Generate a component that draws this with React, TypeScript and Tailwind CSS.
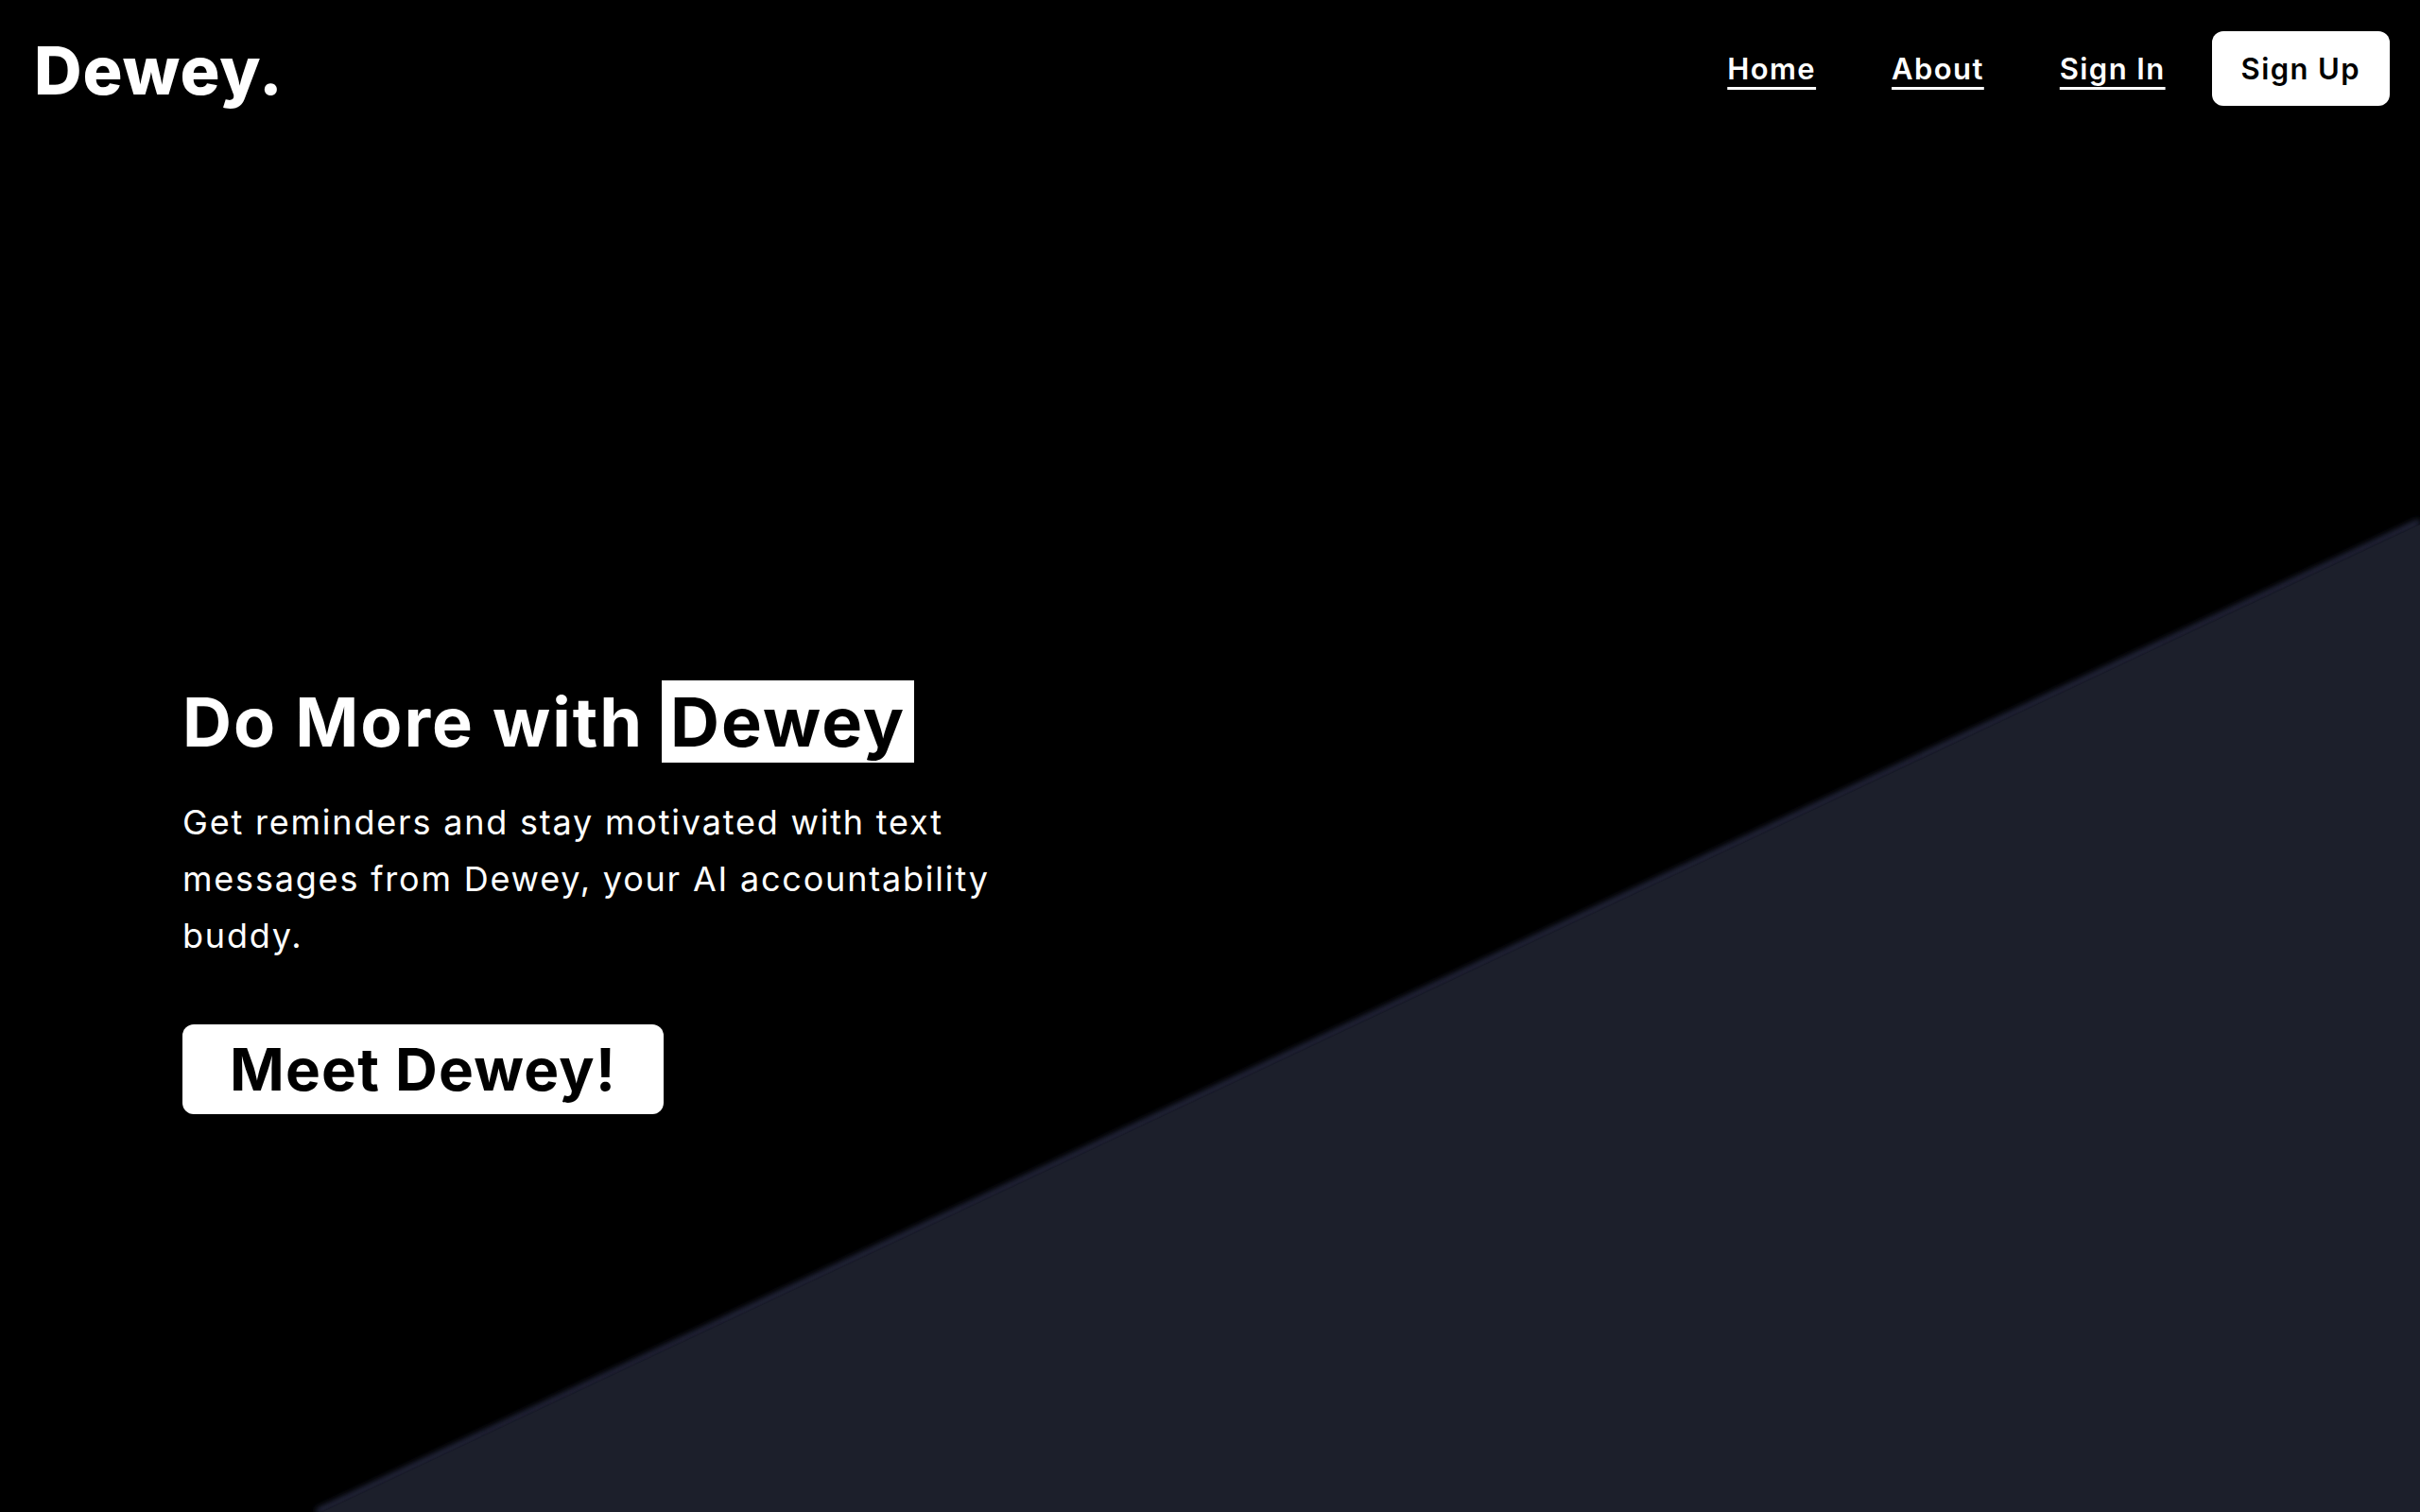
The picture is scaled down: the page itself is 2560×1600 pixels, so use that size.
import React from 'react';

const navLinks = ['Home', 'About', 'Sign In'];

function Backdrop() {
  // Diagonal slab behind the hero, with a faint glow on its edge
  return (
    <svg
      className="pointer-events-none absolute inset-0 h-full w-full"
      viewBox="0 0 2560 1600"
      preserveAspectRatio="none"
    >
      <defs>
        <filter id="edgeGlow" x="-10%" y="-10%" width="120%" height="120%">
          <feGaussianBlur stdDeviation="3" />
        </filter>
      </defs>
      <line
        x1="2560"
        y1="552"
        x2="335"
        y2="1600"
        stroke="#2a2f48"
        strokeWidth="6"
        filter="url(#edgeGlow)"
      />
      <polygon points="2560,555 2560,1600 341,1600" fill="#1c1f2b" />
    </svg>
  );
}

export default function App() {
  return (
    <div className="relative h-[1600px] w-full overflow-hidden bg-black font-['Inter','Liberation_Sans',sans-serif] text-white">
      <Backdrop />

      {/* Top bar */}
      <header className="relative flex h-[144px] items-center justify-between pl-[36px] pr-[32px]">
        <div className="mt-[6px] text-[70px] font-extrabold leading-none tracking-[1px]">Dewey.</div>
        <nav className="flex items-center">
          <div className="flex items-center gap-[80px]">
            {navLinks.map((link) => (
              <a
                key={link}
                href="#"
                className="text-[31px] font-semibold leading-none tracking-[1.4px] underline decoration-[3px] underline-offset-[8px]"
              >
                {link}
              </a>
            ))}
          </div>
          <button className="ml-[49px] flex h-[79px] items-center rounded-[12px] bg-white px-[31px] text-[31px] font-semibold leading-none tracking-[1.4px] text-black">
            Sign Up
          </button>
        </nav>
      </header>

      {/* Hero */}
      <main className="relative pl-[193px] pt-[577px]">
        <h1 className="text-[72px] font-bold leading-[86px] tracking-[2px]">
          Do More with <span className="bg-white px-[9px] text-black">Dewey</span>
        </h1>
        <p className="mt-[33px] w-[900px] text-[36px] font-normal leading-[60px] tracking-[1.8px]">
          Get reminders and stay motivated with text messages from Dewey, your AI accountability buddy.
        </p>
        <button className="mt-[64px] flex h-[95px] items-center rounded-[12px] bg-white px-[50px] text-[62px] font-bold leading-none tracking-[1.2px] text-black">
          Meet Dewey!
        </button>
      </main>
    </div>
  );
}
